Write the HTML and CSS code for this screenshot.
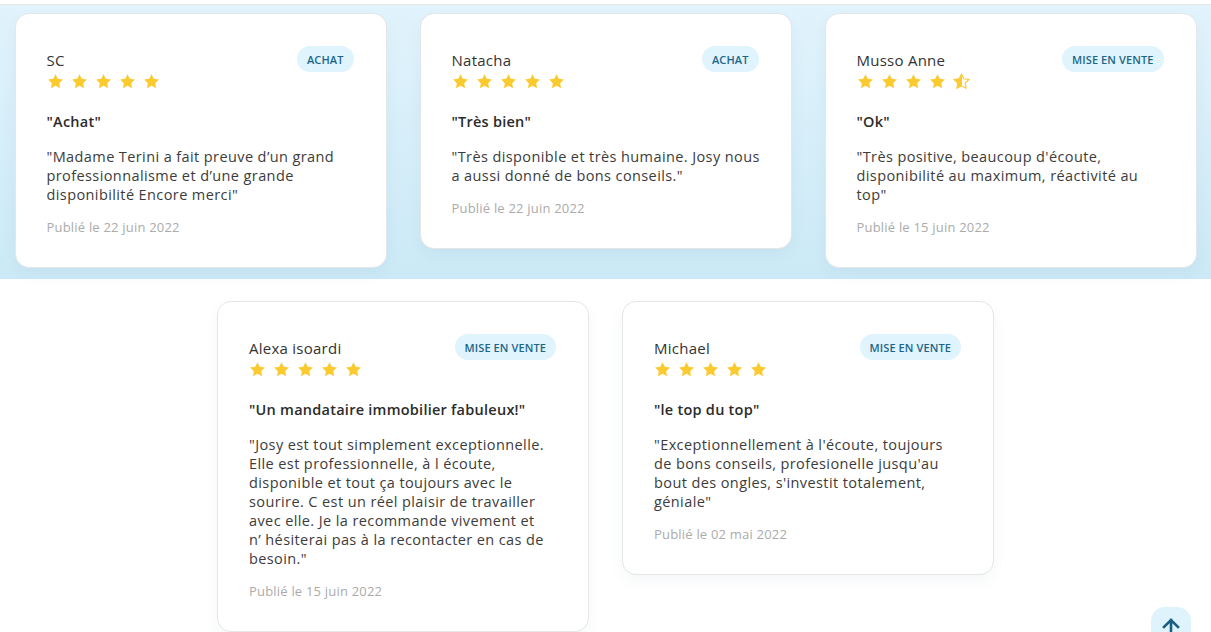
FILE: index.html
```html
<!DOCTYPE html>
<html lang="fr">
<head>
<meta charset="utf-8">
<title>Avis clients</title>
<link rel="stylesheet" href="styles.css">
</head>
<body>
<svg width="0" height="0" class="defs" aria-hidden="true">
  <defs>
    <symbol id="star" viewBox="0 0 24 24"><path d="M12 1.6l3.2 6.6 7.2 1-5.2 5.1 1.2 7.2L12 18.1l-6.4 3.4 1.2-7.2L1.6 9.2l7.2-1z"/></symbol>
    <linearGradient id="half" x1="0" x2="1" y1="0" y2="0">
      <stop offset="50%" stop-color="#fbca2e"/>
      <stop offset="50%" stop-color="#fff"/>
    </linearGradient>
  </defs>
</svg>
<main class="reviews">
  <div class="grid">
    <article class="card">
      <header class="card-head">
        <div>
          <div class="name">SC</div>
          <div class="stars"><svg><use href="#star"/></svg><svg><use href="#star"/></svg><svg><use href="#star"/></svg><svg><use href="#star"/></svg><svg><use href="#star"/></svg></div>
        </div>
        <span class="badge">ACHAT</span>
      </header>
      <h3 class="title">"Achat"</h3>
      <p class="text">"Madame Terini a fait preuve d’un grand<br>professionnalisme et d’une grande<br>disponibilité Encore merci"</p>
      <p class="date">Publié le 22 juin 2022</p>
    </article>
    <article class="card">
      <header class="card-head">
        <div>
          <div class="name">Natacha</div>
          <div class="stars"><svg><use href="#star"/></svg><svg><use href="#star"/></svg><svg><use href="#star"/></svg><svg><use href="#star"/></svg><svg><use href="#star"/></svg></div>
        </div>
        <span class="badge">ACHAT</span>
      </header>
      <h3 class="title">"Très bien"</h3>
      <p class="text">"Très disponible et très humaine. Josy nous<br>a aussi donné de bons conseils."</p>
      <p class="date">Publié le 22 juin 2022</p>
    </article>
    <article class="card">
      <header class="card-head">
        <div>
          <div class="name">Musso Anne</div>
          <div class="stars"><svg><use href="#star"/></svg><svg><use href="#star"/></svg><svg><use href="#star"/></svg><svg><use href="#star"/></svg><svg class="half"><use href="#star"/></svg></div>
        </div>
        <span class="badge">MISE EN VENTE</span>
      </header>
      <h3 class="title">"Ok"</h3>
      <p class="text">"Très positive, beaucoup d'écoute,<br>disponibilité au maximum, réactivité au<br>top"</p>
      <p class="date">Publié le 15 juin 2022</p>
    </article>
    <article class="card">
      <header class="card-head">
        <div>
          <div class="name">Alexa isoardi</div>
          <div class="stars"><svg><use href="#star"/></svg><svg><use href="#star"/></svg><svg><use href="#star"/></svg><svg><use href="#star"/></svg><svg><use href="#star"/></svg></div>
        </div>
        <span class="badge">MISE EN VENTE</span>
      </header>
      <h3 class="title">"Un mandataire immobilier fabuleux!"</h3>
      <p class="text">"Josy est tout simplement exceptionnelle.<br>Elle est professionnelle, à l écoute,<br>disponible et tout ça toujours avec le<br>sourire. C est un réel plaisir de travailler<br>avec elle. Je la recommande vivement et<br>n’ hésiterai pas à la recontacter en cas de<br>besoin."</p>
      <p class="date">Publié le 15 juin 2022</p>
    </article>
    <article class="card">
      <header class="card-head">
        <div>
          <div class="name">Michael</div>
          <div class="stars"><svg><use href="#star"/></svg><svg><use href="#star"/></svg><svg><use href="#star"/></svg><svg><use href="#star"/></svg><svg><use href="#star"/></svg></div>
        </div>
        <span class="badge">MISE EN VENTE</span>
      </header>
      <h3 class="title">"le top du top"</h3>
      <p class="text">"Exceptionnellement à l'écoute, toujours<br>de bons conseils, profesionelle jusqu'au<br>bout des ongles, s'investit totalement,<br>géniale"</p>
      <p class="date">Publié le 02 mai 2022</p>
    </article>
  </div>
</main>
<button class="to-top" aria-label="Retour en haut">
  <svg viewBox="0 0 24 24" width="24" height="24"><path d="M12 20V5M5 12l7-7 7 7" fill="none" stroke="currentColor" stroke-width="2.6" stroke-linecap="square"/></svg>
</button>
</body>
</html>
```

FILE: styles.css
```css
* { box-sizing: border-box; }
html, body { margin: 0; padding: 0; }
body {
  font-family: "Open Sans", "Noto Sans", sans-serif;
  color: #333;
  background: #fff;
  padding-top: 4px;
  overflow: hidden;
  height: 632px;
}
.defs { position: absolute; }
.reviews {
  border-top: 1px solid #e6e6e6;
  background: linear-gradient(to bottom, #e1f3fc 0, #cbe9f6 274px) top left / 100% 274px no-repeat, #fff;
  padding: 8px 14px 40px;
}
.grid {
  display: flex;
  flex-wrap: wrap;
  justify-content: center;
  align-items: flex-start;
  column-gap: 33px;
  row-gap: 33px;
}
.card {
  width: 372px;
  background: #fff;
  border: 1px solid #e4e6e8;
  border-radius: 14px;
  padding: 32px 29px 30px 31px;
  box-shadow: 0 6px 14px rgba(60, 90, 110, 0.05);
}
.card-head {
  display: flex;
  justify-content: space-between;
  align-items: flex-start;
  margin-right: 3px;
}
.name {
  font-size: 15px;
  line-height: 28px;
  letter-spacing: 0.25px;
  color: #333;
}
.stars {
  display: flex;
  gap: 7px;
  height: 16px;
}
.stars svg {
  width: 17px;
  height: 17px;
  fill: #fbca2e;
  margin-top: -1px;
}
.stars svg.half {
  fill: url(#half);
  stroke: #fbca2e;
  stroke-width: 1.6;
}
.badge {
  display: inline-flex;
  align-items: center;
  height: 26px;
  padding: 0 10px;
  border-radius: 13px;
  background: #e0f4fd;
  color: #1d6689;
  font-size: 11px;
  font-weight: 600;
  letter-spacing: 0.1px;
}
.title {
  margin: 22px 0 0;
  font-size: 14.5px;
  line-height: 19px;
  font-weight: 600;
  letter-spacing: 0.25px;
  color: #2b2b2b;
}
.text {
  margin: 16px 0 0;
  font-size: 14.5px;
  line-height: 19px;
  letter-spacing: 0.4px;
  color: #3c3c3c;
}
.date {
  margin: 14px 0 0;
  font-size: 13px;
  line-height: 19px;
  letter-spacing: 0.2px;
  color: #ababab;
}
.to-top {
  position: fixed;
  right: 20px;
  bottom: -15px;
  width: 40px;
  height: 40px;
  border: none;
  border-radius: 14px;
  background: #dff3fc;
  color: #1b5f80;
  padding: 8px 0 0;
  display: flex;
  justify-content: center;
  align-items: flex-start;
}
```
